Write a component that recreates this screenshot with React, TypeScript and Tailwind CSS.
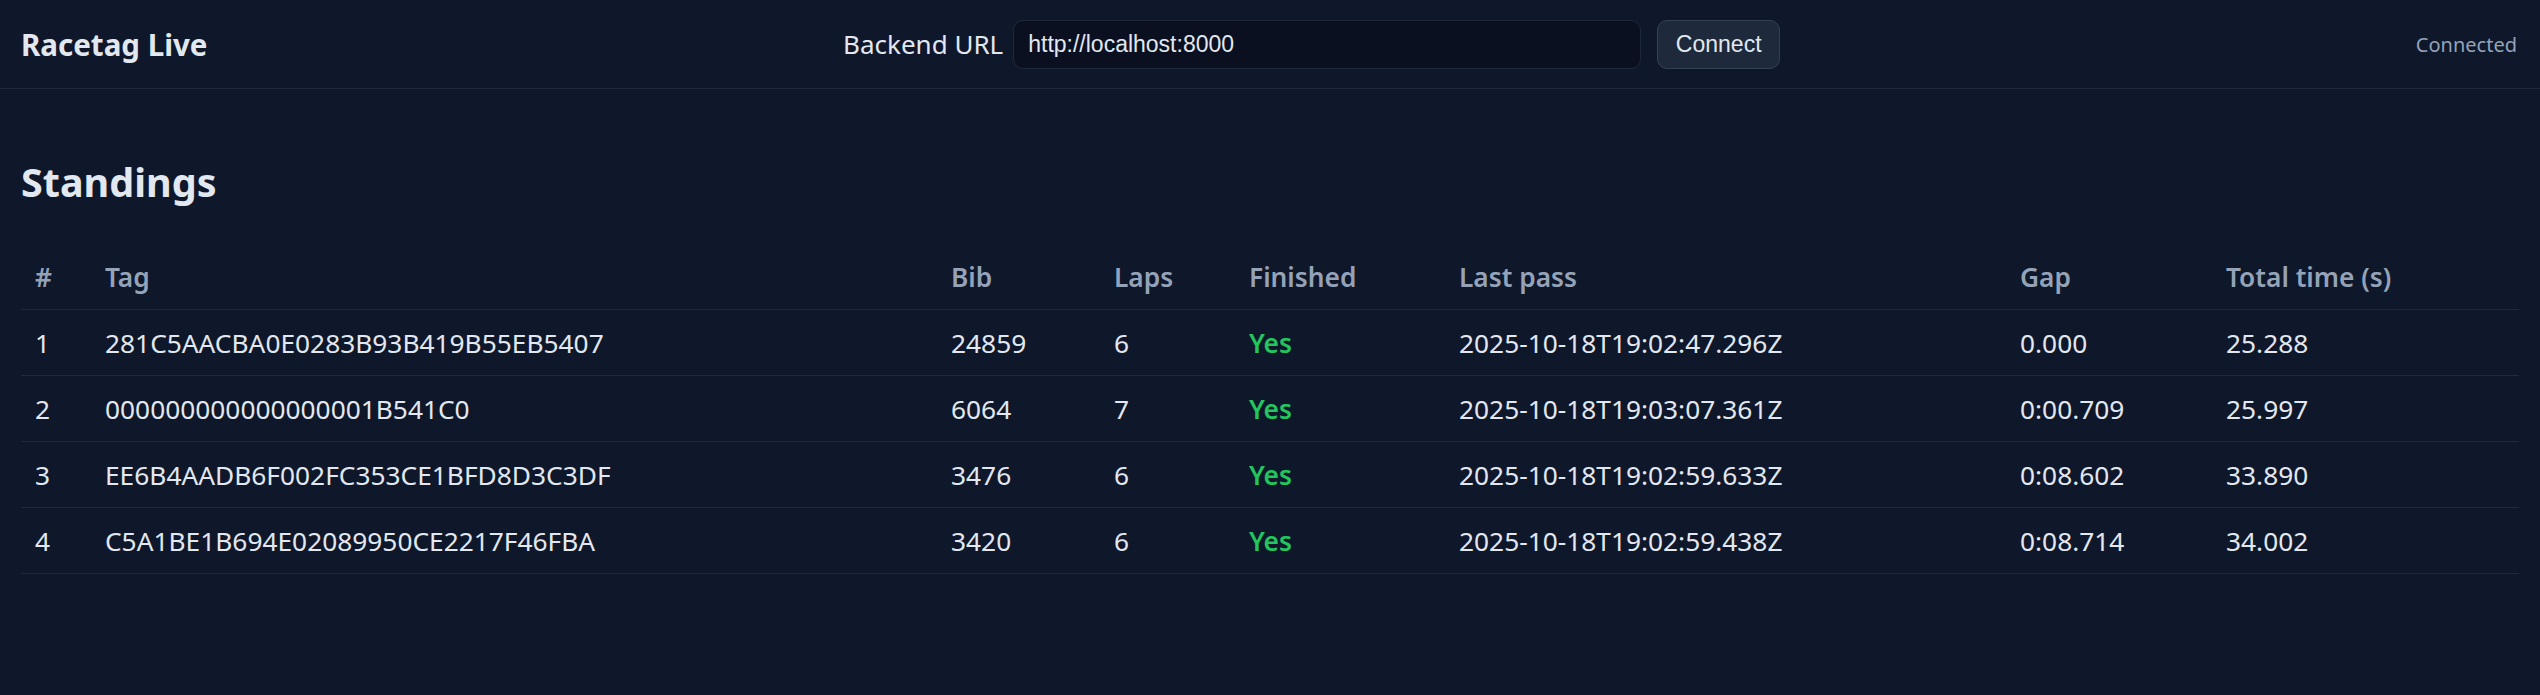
import React from "react";

type Row = {
  pos: number;
  tag: string;
  bib: string;
  laps: number;
  finished: boolean;
  last: string;
  gap: string;
  total: string;
};

const rows: Row[] = [
  { pos: 1, tag: "281C5AACBA0E0283B93B419B55EB5407", bib: "24859", laps: 6, finished: true, last: "2025-10-18T19:02:47.296Z", gap: "0.000", total: "25.288" },
  { pos: 2, tag: "000000000000000001B541C0", bib: "6064", laps: 7, finished: true, last: "2025-10-18T19:03:07.361Z", gap: "0:00.709", total: "25.997" },
  { pos: 3, tag: "EE6B4AADB6F002FC353CE1BFD8D3C3DF", bib: "3476", laps: 6, finished: true, last: "2025-10-18T19:02:59.633Z", gap: "0:08.602", total: "33.890" },
  { pos: 4, tag: "C5A1BE1B694E02089950CE2217F46FBA", bib: "3420", laps: 6, finished: true, last: "2025-10-18T19:02:59.438Z", gap: "0:08.714", total: "34.002" },
];

export default function App() {
  return (
    <div
      className="min-h-screen w-full bg-[#0f172a] text-[#e2e8f0]"
      style={{ fontFamily: '"Noto Sans", "Open Sans", sans-serif' }}
    >
      <header className="flex h-[89px] items-center justify-between border-b border-[#1e293b] pl-[21px] pr-[23px]">
        <div className="pt-[2px] text-[29.5px] font-bold leading-none text-[#e2e8f0]">Racetag Live</div>
        <div className="flex items-center">
          <label className="mr-[10px] text-[26px] leading-none text-[#e2e8f0]">Backend URL</label>
          <input
            defaultValue="http://localhost:8000"
            className="h-[49px] w-[628px] rounded-[10px] border border-[#1e293b] bg-[#0a1020] px-[14px] text-[23px] text-[#e2e8f0] outline-none"
            style={{ fontFamily: '"Liberation Sans", Arial, sans-serif' }}
          />
          <button
            className="ml-[16px] h-[49px] w-[123px] rounded-[10px] border border-[#334155] bg-[#1e293b] text-[23px] text-[#e2e8f0]"
            style={{ fontFamily: '"Liberation Sans", Arial, sans-serif' }}
          >
            Connect
          </button>
        </div>
        <div className="pt-[2px] text-[20px] leading-none text-[#94a3b8]">Connected</div>
      </header>

      <main className="px-[21px] pt-[65px]">
        <h2 className="mb-[33px] text-[39.5px] font-bold leading-[56px] text-[#e2e8f0]">Standings</h2>
        <table className="w-full table-fixed border-collapse text-left text-[26.3px]">
          <colgroup>
            <col className="w-[70px]" />
            <col className="w-[846px]" />
            <col className="w-[163px]" />
            <col className="w-[135px]" />
            <col className="w-[210px]" />
            <col className="w-[561px]" />
            <col className="w-[206px]" />
            <col className="w-[307px]" />
          </colgroup>
          <thead>
            <tr className="h-[66px] border-b border-[#1e293b]">
              {["#", "Tag", "Bib", "Laps", "Finished", "Last pass", "Gap", "Total time (s)"].map((h) => (
                <th key={h} className="px-[14px] pt-[3px] align-middle font-semibold text-[#94a3b8]">
                  {h}
                </th>
              ))}
            </tr>
          </thead>
          <tbody>
            {rows.map((r) => (
              <tr key={r.pos} className="h-[66px] border-b border-[#1e293b]">
                <td className="px-[14px] pt-[3px] align-middle">{r.pos}</td>
                <td className="px-[14px] pt-[3px] align-middle">{r.tag}</td>
                <td className="px-[14px] pt-[3px] align-middle">{r.bib}</td>
                <td className="px-[14px] pt-[3px] align-middle">{r.laps}</td>
                <td className="px-[14px] pt-[3px] align-middle font-semibold text-[#22c55e]">{r.finished ? "Yes" : "No"}</td>
                <td className="px-[14px] pt-[3px] align-middle">{r.last}</td>
                <td className="px-[14px] pt-[3px] align-middle">{r.gap}</td>
                <td className="px-[14px] pt-[3px] align-middle">{r.total}</td>
              </tr>
            ))}
          </tbody>
        </table>
      </main>
    </div>
  );
}
